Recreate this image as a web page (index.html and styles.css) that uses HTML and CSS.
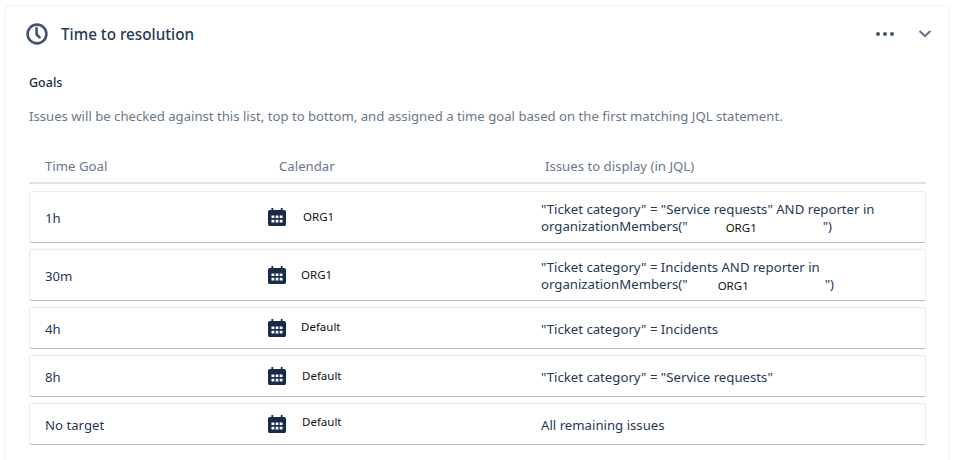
FILE: index.html
```html
<!DOCTYPE html>
<html>

<head>
    <meta charset="UTF-8">
    <title>Time to resolution</title>
    <link rel="stylesheet" href="styles.css">
</head>

<body>
    <svg class="defs" width="0" height="0">
        <symbol id="cal" viewBox="0 0 18 18">
            <path fill="#172b4d" d="M3.4 0h1.8v2h7.6V0h1.8v2h1.4C17.2 2 18 2.8 18 3.8v12.4c0 1-.8 1.8-1.8 1.8H1.8C.8 18 0 17.2 0 16.2V3.8C0 2.8 .8 2 1.8 2h1.6z" />
            <path fill="#fff" d="M3.5 7.5h2.8v2.6H3.5zM7.6 7.5h2.8v2.6H7.6zM11.7 7.5h2.8v2.6h-2.8zM3.5 11.8h2.8v2.6H3.5zM7.6 11.8h2.8v2.6H7.6zM11.7 11.8h2.8v2.6h-2.8z" />
        </symbol>
    </svg>

    <div class="card">
        <div class="card-head">
            <svg class="clock" width="24" height="24" viewBox="0 0 24 24">
                <circle cx="12" cy="12" r="9.4" fill="none" stroke="#42526e" stroke-width="2.6" />
                <path d="M11.6 6.4v6l3 3" fill="none" stroke="#42526e" stroke-width="2.6" stroke-linecap="round" />
            </svg>
            <h2>Time to resolution</h2>
            <div class="dots"><i></i><i></i><i></i></div>
            <svg class="chevron" width="14" height="10" viewBox="0 0 14 10">
                <path d="M1.5 2l5.5 5 5.5-5" fill="none" stroke="#6b778c" stroke-width="2.2" />
            </svg>
        </div>

        <div class="goals">
            <h3>Goals</h3>
            <p class="hint">Issues will be checked against this list, top to bottom, and assigned a time goal based on the first matching JQL statement.</p>

            <div class="table-head">
                <div class="th-goal">Time Goal</div>
                <div class="th-cal">Calendar</div>
                <div class="th-jql">Issues to display (in JQL)</div>
            </div>

            <div class="row tall">
                <div class="goal">1h</div>
                <div class="cal"><svg width="18" height="18"><use href="#cal" /></svg><span class="name far">ORG1</span></div>
                <div class="jql">"Ticket category" = "Service requests" AND reporter in<br>organizationMembers("<span class="org org-a">ORG1</span>")</div>
            </div>

            <div class="row tall">
                <div class="goal">30m</div>
                <div class="cal"><svg width="18" height="18"><use href="#cal" /></svg><span class="name">ORG1</span></div>
                <div class="jql">"Ticket category" = Incidents AND reporter in<br>organizationMembers("<span class="org org-b">ORG1</span>")</div>
            </div>

            <div class="row">
                <div class="goal">4h</div>
                <div class="cal"><svg width="18" height="18"><use href="#cal" /></svg><span class="name up">Default</span></div>
                <div class="jql">"Ticket category" = Incidents</div>
            </div>

            <div class="row">
                <div class="goal">8h</div>
                <div class="cal"><svg width="18" height="18"><use href="#cal" /></svg><span class="name mid">Default</span></div>
                <div class="jql">"Ticket category" = "Service requests"</div>
            </div>

            <div class="row">
                <div class="goal">No target</div>
                <div class="cal"><svg width="18" height="18"><use href="#cal" /></svg><span class="name mid top">Default</span></div>
                <div class="jql">All remaining issues</div>
            </div>
        </div>
    </div>
</body>

</html>
```

FILE: styles.css
```css
body {
    margin: 0;
    height: 460px;
    overflow: hidden;
    background: #fff;
    font-family: "Noto Sans", sans-serif;
    font-size: 13.2px;
    color: #253858;
}

.defs {
    position: absolute;
}

.card {
    margin: 5px 6px 0 4px;
    height: 455px;
    border: 1px solid #f1f2f4;
    border-bottom: none;
    border-radius: 6px 6px 0 0;
    box-sizing: border-box;
}

.card-head {
    display: flex;
    align-items: center;
    height: 56px;
    padding: 0 17px 0 20px;
}

.clock {
    margin-right: 12px;
}

h2 {
    flex: 1;
    margin: 0;
    font-size: 15.25px;
    font-weight: 500;
    color: #253858;
}

.dots {
    display: flex;
    gap: 3px;
    margin-right: 24px;
}

.dots i {
    width: 4px;
    height: 4px;
    border-radius: 50%;
    background: #42526e;
}

.goals {
    padding: 0 23px 0 24px;
}

h3 {
    margin: 12px 0 0;
    font-size: 12.5px;
    line-height: 17px;
    font-weight: 500;
    color: #172b4d;
}

.hint {
    margin: 16px 0 0;
    font-size: 13.15px;
    line-height: 18px;
    color: #6b778c;
}

.table-head {
    display: flex;
    height: 41px;
    margin-top: 18px;
    padding-bottom: 7px;
    align-items: flex-end;
    border-bottom: 2px solid #dfe1e6;
    box-sizing: border-box;
    color: #6b778c;
}

.th-goal {
    width: 250px;
    padding-left: 16px;
    box-sizing: border-box;
}

.th-cal {
    width: 266px;
}

.row {
    display: flex;
    align-items: center;
    height: 42px;
    margin-top: 6px;
    padding-top: 1px;
    border: 1px solid #ebecf0;
    border-bottom: 1px solid #b3bac8;
    border-radius: 3px;
    box-sizing: border-box;
}

.table-head + .row {
    margin-top: 7px;
}

.tall {
    height: 52px;
}

.goal {
    width: 238px;
    padding-left: 15px;
    box-sizing: border-box;
}

.cal {
    display: flex;
    align-items: center;
    width: 273px;
}

.cal svg {
    margin-top: -2px;
}

.name {
    margin: -2px 0 0 15px;
    font-size: 11.5px;
    color: #111;
}

.far {
    margin-left: 17px;
}

.mid {
    margin-left: 16px;
}

.up {
    margin-top: -4px;
}

.top {
    margin-top: -6px;
}

.jql {
    padding-top: 2px;
    line-height: 17px;
    color: #253858;
}

.org {
    display: inline-block;
    font-size: 11.5px;
    color: #111;
    vertical-align: -1px;
}

.org-a {
    margin: 0 66px 0 38px;
}

.org-b {
    margin: 0 76px 0 30px;
}
```
